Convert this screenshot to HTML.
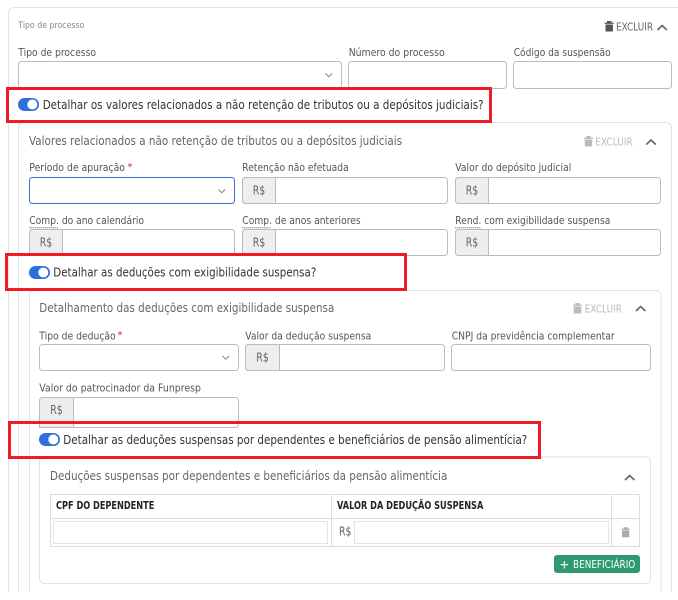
<!DOCTYPE html>
<html lang="pt-BR"><head><meta charset="utf-8"><title>Tipo de processo</title>
<style>
html,body{margin:0;padding:0;background:#fff}
svg{display:block}
text{font-family:"DejaVu Sans",sans-serif;font-size:11px;fill:#555}
.t{font-size:12px;fill:#666}
.q{font-size:12px;fill:#333}
.e{font-size:11px;fill:#666}
.d{font-size:11px;fill:#bbb}
.h{font-size:10.500px;font-weight:bold;fill:#222}
.r{font-size:12px;fill:#666}
.b{fill:#fff;stroke:#bbb;stroke-width:1}
.a{fill:#eee;stroke:#bbb;stroke-width:1}
.c{fill:none;stroke:#e2e2e2;stroke-width:1}
.ch{fill:none;stroke:#666;stroke-width:1.700}
.sc{fill:none;stroke:#777;stroke-width:.9}
.red{fill:none;stroke:#ed1c24;stroke-width:3}
</style></head><body>
<svg width="678" height="600" viewBox="0 0 678 600" xmlns="http://www.w3.org/2000/svg">
<rect width="678" height="600" fill="#fff"/>
<!-- cards -->
<path class="c" d="M8.500 591.500V13.500a6 6 0 0 1 6-6H678"/>
<path class="c" d="M18.500 591.500V127.500a5 5 0 0 1 5-5H666.500a5 5 0 0 1 5 5V591.500"/>
<path class="c" d="M29.500 591.500V295.500a5 5 0 0 1 5-5H656a5 5 0 0 1 5 5V591.500"/>
<path class="c" d="M39.500 462a5 5 0 0 1 5-5H645.500a5 5 0 0 1 5 5V578.500a5 5 0 0 1-5 5H44.500a5 5 0 0 1-5-5Z"/>

<!-- header 1 -->
<text x="18.300" y="28" style="font-size:8.500px;fill:#888" textLength="66" lengthAdjust="spacingAndGlyphs">Tipo de processo</text>
<path fill="#555" d="M604.700 22.600h9v1.300h-9zM607 21h4.400v1.600H607zM605.500 24.500h7.400V31.500h-7.400z"/>
<text class="e" x="616" y="30.500" textLength="37" lengthAdjust="spacingAndGlyphs">EXCLUIR</text>
<path class="ch" d="M657.500 30l4.700-4.500 4.700 4.500"/>

<text x="18.300" y="56" textLength="77.700" lengthAdjust="spacingAndGlyphs">Tipo de processo</text>
<text x="348.700" y="56" textLength="96" lengthAdjust="spacingAndGlyphs">Número do processo</text>
<text x="513.700" y="56" textLength="97" lengthAdjust="spacingAndGlyphs">Código da suspensão</text>
<rect class="b" x="18.500" y="61.500" width="323" height="27" rx="3"/>
<rect class="b" x="348.500" y="61.500" width="158" height="27" rx="3"/>
<rect class="b" x="513.500" y="61.500" width="158" height="27" rx="3"/>
<path class="sc" d="M325.500 73.500l3.300 3.300 3.300-3.300"/>

<!-- card 2 -->
<text class="t" x="29" y="145" textLength="373" lengthAdjust="spacingAndGlyphs">Valores relacionados a não retenção de tributos ou a depósitos judiciais</text>
<path fill="#bbb" d="M584 137.600h9v1.300h-9zM586.300 136h4.400v1.600h-4.400zM584.800 139.500h7.400v7h-7.400z"/>
<text class="d" x="595.300" y="145.500" textLength="37.400" lengthAdjust="spacingAndGlyphs">EXCLUIR</text>
<path class="ch" d="M646.300 144.500l4.700-4.500 4.700 4.500"/>

<text x="29.300" y="171" textLength="95.700" lengthAdjust="spacingAndGlyphs">Período de apuração</text>
<text x="127.500" y="170" style="font-size:10px;fill:#d9281e">*</text>
<text x="242.300" y="171" textLength="106.400" lengthAdjust="spacingAndGlyphs">Retenção não efetuada</text>
<text x="455.300" y="171" textLength="116" lengthAdjust="spacingAndGlyphs">Valor do depósito judicial</text>
<rect x="29.500" y="177.500" width="205" height="26" rx="3" fill="#fff" stroke="#2f6fd0"/>
<path class="sc" d="M218.500 189.500l3.300 3.300 3.300-3.300"/>
<rect class="b" x="242.500" y="177.500" width="205" height="26" rx="3"/>
<path class="a" d="M275.500 177.500H245.500a3 3 0 0 0-3 3v20a3 3 0 0 0 3 3h30z"/>
<text class="r" x="252.700" y="194.500" textLength="12.500" lengthAdjust="spacingAndGlyphs">R$</text>
<rect class="b" x="455.500" y="177.500" width="205" height="26" rx="3"/>
<path class="a" d="M488.500 177.500H458.500a3 3 0 0 0-3 3v20a3 3 0 0 0 3 3h30z"/>
<text class="r" x="465.700" y="194.500" textLength="12.500" lengthAdjust="spacingAndGlyphs">R$</text>

<text x="29.300" y="224" textLength="114.700" lengthAdjust="spacingAndGlyphs">Comp. do ano calendário</text>
<text x="242.300" y="224" textLength="118.400" lengthAdjust="spacingAndGlyphs">Comp. de anos anteriores</text>
<text x="455.300" y="224" textLength="155" lengthAdjust="spacingAndGlyphs">Rend. com exigibilidade suspensa</text>
<path d="M29.300 227.700H58M242.300 227.700H270.500M455.300 227.700H481" stroke="#555" stroke-width="1" stroke-dasharray="1 1" fill="none"/>
<rect class="b" x="29.500" y="229.500" width="205" height="26" rx="3"/>
<path class="a" d="M62.500 229.500H32.500a3 3 0 0 0-3 3v20a3 3 0 0 0 3 3h30z"/>
<text class="r" x="39.700" y="246.500" textLength="12.500" lengthAdjust="spacingAndGlyphs">R$</text>
<rect class="b" x="242.500" y="229.500" width="205" height="26" rx="3"/>
<path class="a" d="M275.500 229.500H245.500a3 3 0 0 0-3 3v20a3 3 0 0 0 3 3h30z"/>
<text class="r" x="252.700" y="246.500" textLength="12.500" lengthAdjust="spacingAndGlyphs">R$</text>
<rect class="b" x="455.500" y="229.500" width="205" height="26" rx="3"/>
<path class="a" d="M488.500 229.500H458.500a3 3 0 0 0-3 3v20a3 3 0 0 0 3 3h30z"/>
<text class="r" x="465.700" y="246.500" textLength="12.500" lengthAdjust="spacingAndGlyphs">R$</text>

<!-- card 3 -->
<text class="t" x="39.300" y="312" textLength="295" lengthAdjust="spacingAndGlyphs">Detalhamento das deduções com exigibilidade suspensa</text>
<path fill="#bbb" d="M573 304.600h9v1.300h-9zM575.300 303h4.400v1.600h-4.400zM573.800 306.500h7.400v7h-7.400z"/>
<text class="d" x="584.700" y="312.500" textLength="37.300" lengthAdjust="spacingAndGlyphs">EXCLUIR</text>
<path class="ch" d="M636 311l4.700-4.500 4.700 4.500"/>

<text x="39.300" y="339.500" textLength="76.400" lengthAdjust="spacingAndGlyphs">Tipo de dedução</text>
<text x="117.500" y="338" style="font-size:10px;fill:#d9281e">*</text>
<text x="245.300" y="339.500" textLength="126" lengthAdjust="spacingAndGlyphs">Valor da dedução suspensa</text>
<text x="451.700" y="339.500" textLength="163" lengthAdjust="spacingAndGlyphs">CNPJ da previdência complementar</text>
<rect class="b" x="39.500" y="344.500" width="199" height="26" rx="3"/>
<path class="sc" d="M222.500 356l3.300 3.300 3.300-3.300"/>
<rect class="b" x="245.500" y="344.500" width="199" height="26" rx="3"/>
<path class="a" d="M279.500 344.500H248.500a3 3 0 0 0-3 3v20a3 3 0 0 0 3 3h31z"/>
<text class="r" x="256.300" y="361.500" textLength="12.500" lengthAdjust="spacingAndGlyphs">R$</text>
<rect class="b" x="451.500" y="344.500" width="199" height="26" rx="3"/>

<text x="39.300" y="391.500" textLength="161.700" lengthAdjust="spacingAndGlyphs">Valor do patrocinador da Funpresp</text>
<rect class="b" x="39.500" y="397.500" width="199" height="30" rx="3"/>
<path class="a" d="M73.500 397.500H42.500a3 3 0 0 0-3 3v27h34z"/>
<text class="r" x="50.300" y="414" textLength="12.500" lengthAdjust="spacingAndGlyphs">R$</text>

<!-- card 4 -->
<text class="t" x="50" y="480" textLength="397.300" lengthAdjust="spacingAndGlyphs">Deduções suspensas por dependentes e beneficiários da pensão alimentícia</text>
<path class="ch" d="M625 480l4.700-4.500 4.700 4.500"/>
<path fill="none" stroke="#ddd" d="M50.500 494.500H639.500V546.500H50.500ZM50.500 518.500H639.500M331.500 494.500V546.500M611.500 494.500V546.500"/>
<text class="h" x="56" y="509" textLength="98.300" lengthAdjust="spacingAndGlyphs">CPF DO DEPENDENTE</text>
<text class="h" x="337" y="509" textLength="146.300" lengthAdjust="spacingAndGlyphs">VALOR DA DEDUÇÃO SUSPENSA</text>
<rect x="53.500" y="521.500" width="274" height="22" fill="#fff" stroke="#e4e4e4"/>
<text class="r" x="339" y="535.500" textLength="12.500" lengthAdjust="spacingAndGlyphs">R$</text>
<rect x="354.500" y="521.500" width="254" height="22" fill="#fff" stroke="#e4e4e4"/>
<path fill="#aaa" d="M621.300 528.800h8.700v1.100h-8.700zM623.500 527.300h4.300v1.500h-4.300zM622.100 530.400h7.100v6.900h-7.100z"/>
<rect x="554" y="555" width="86" height="18" rx="3" fill="#2e9a70"/>
<path d="M564.300 561v7.500M560.600 564.700h7.500" stroke="#fff" stroke-width="1.100" fill="none"/>
<text x="573" y="568" style="font-size:11px;fill:#fff" textLength="62.300" lengthAdjust="spacingAndGlyphs">BENEFICIÁRIO</text>

<!-- red boxes and toggles -->
<rect class="red" x="7.500" y="88.500" width="483" height="33"/>
<rect x="18" y="98" width="21" height="13" rx="6.500" fill="#2f6fdb"/>
<circle cx="32.300" cy="104.500" r="5" fill="#fff"/>
<text class="q" x="42.700" y="109" textLength="441" lengthAdjust="spacingAndGlyphs">Detalhar os valores relacionados a não retenção de tributos ou a depósitos judiciais?</text>

<rect class="red" x="6.500" y="254.500" width="399" height="35"/>
<rect x="29" y="266" width="21" height="13" rx="6.500" fill="#2f6fdb"/>
<circle cx="43.300" cy="272.500" r="5" fill="#fff"/>
<text class="q" x="53.300" y="276.500" textLength="263" lengthAdjust="spacingAndGlyphs">Detalhar as deduções com exigibilidade suspensa?</text>

<rect class="red" x="9.500" y="422.500" width="530" height="35"/>
<rect x="39" y="433" width="21" height="13" rx="6.500" fill="#2f6fdb"/>
<circle cx="53.300" cy="439.500" r="5" fill="#fff"/>
<text class="q" x="63.300" y="444" textLength="464" lengthAdjust="spacingAndGlyphs">Detalhar as deduções suspensas por dependentes e beneficiários de pensão alimentícia?</text>
</svg>
</body></html>
